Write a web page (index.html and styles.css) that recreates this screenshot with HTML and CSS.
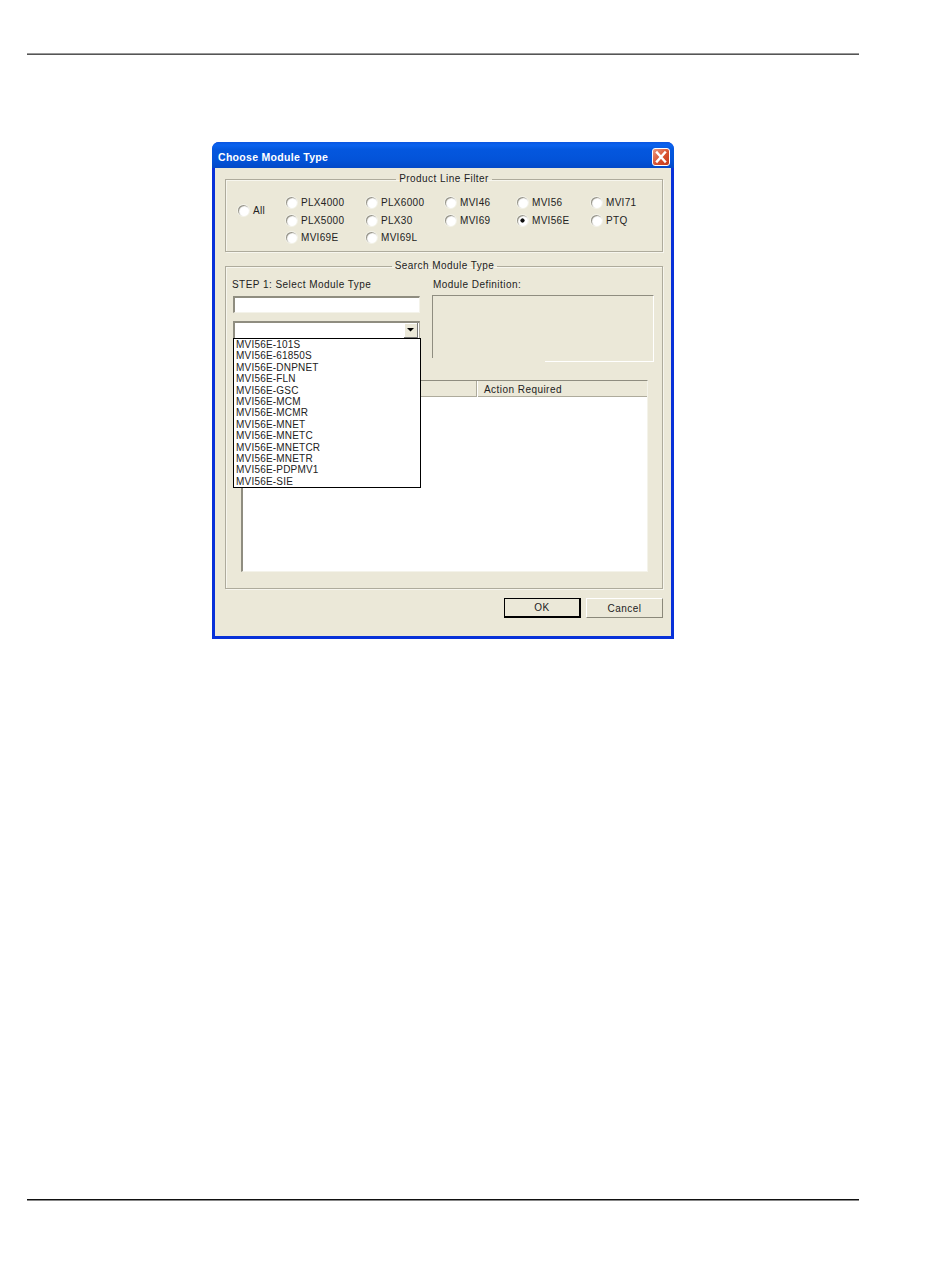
FILE: index.html
```html
<!DOCTYPE html>
<html lang="en">
<head>
<meta charset="utf-8">
<title>Choose Module Type</title>
<link rel="stylesheet" href="styles.css">
</head>
<body>
<div class="page">
  <div class="rule rule-top"></div>
  <section class="dialog">
    <header class="titlebar">
      <span class="title">Choose Module Type</span>
      <span class="close">
        <svg viewBox="0 0 18 18" width="18" height="18"><path d="M5 4.5 L13 13.5 M13 4.5 L5 13.5" stroke="#fff" stroke-width="2.4" stroke-linecap="square" fill="none"/></svg>
      </span>
    </header>
    <div class="client">
      <fieldset class="group filter">
        <legend>Product Line Filter</legend>
        <div class="filter-row">
          <label class="radio all"><input type="radio" name="pl"><span>All</span></label>
          <div class="radio-grid">
            <label class="radio"><input type="radio" name="pl"><span>PLX4000</span></label>
            <label class="radio"><input type="radio" name="pl"><span>PLX6000</span></label>
            <label class="radio"><input type="radio" name="pl"><span>MVI46</span></label>
            <label class="radio"><input type="radio" name="pl"><span>MVI56</span></label>
            <label class="radio"><input type="radio" name="pl"><span>MVI71</span></label>
            <label class="radio"><input type="radio" name="pl"><span>PLX5000</span></label>
            <label class="radio"><input type="radio" name="pl"><span>PLX30</span></label>
            <label class="radio"><input type="radio" name="pl"><span>MVI69</span></label>
            <label class="radio"><input type="radio" name="pl" checked><span>MVI56E</span></label>
            <label class="radio"><input type="radio" name="pl"><span>PTQ</span></label>
            <label class="radio"><input type="radio" name="pl"><span>MVI69E</span></label>
            <label class="radio"><input type="radio" name="pl"><span>MVI69L</span></label>
          </div>
        </div>
      </fieldset>
      <fieldset class="group search">
        <legend>Search Module Type</legend>
        <div class="search-top">
          <div class="step">
            <div class="label">STEP 1: Select Module Type</div>
            <div class="textbox"></div>
            <div class="combo">
              <span class="arrow"><svg viewBox="0 0 13 13" width="13" height="13"><path d="M3 5 H10 L6.5 8.5 Z" fill="#000"/></svg></span>
            </div>
            <ul class="dropdown">
              <li>MVI56E-101S</li>
              <li>MVI56E-61850S</li>
              <li>MVI56E-DNPNET</li>
              <li>MVI56E-FLN</li>
              <li>MVI56E-GSC</li>
              <li>MVI56E-MCM</li>
              <li>MVI56E-MCMR</li>
              <li>MVI56E-MNET</li>
              <li>MVI56E-MNETC</li>
              <li>MVI56E-MNETCR</li>
              <li>MVI56E-MNETR</li>
              <li>MVI56E-PDPMV1</li>
              <li>MVI56E-SIE</li>
            </ul>
          </div>
          <div class="definition">
            <div class="label">Module Definition:</div>
            <div class="defbox"></div>
          </div>
        </div>
        <div class="listview">
          <div class="lv-head">
            <div class="lv-col lv-first"></div>
            <div class="lv-col">Action Required</div>
          </div>
          <div class="lv-body"></div>
        </div>
      </fieldset>
      <div class="actions">
        <button class="btn btn-default" type="button">OK</button>
        <button class="btn" type="button">Cancel</button>
      </div>
    </div>
  </section>
  <div class="rule rule-bottom"></div>
</div>
</body>
</html>
```
FILE: styles.css
```css
* { box-sizing: border-box; }
html, body { margin: 0; padding: 0; background: #fff; }
.page {
  height: 1267px;
  padding-top: 53px;
  padding-bottom: 66px;
  display: flex;
  flex-direction: column;
  overflow: hidden;
  font-family: "Liberation Sans", Arial, sans-serif;
  font-size: 10px;
  letter-spacing: 0.45px;
  color: #222;
}
.rule { margin: 0 91px 0 27px; flex: none; }
.rule-top { height: 2px; background: #555; border-top: 1px solid #999; }
.rule-bottom { height: 2px; background: #888; border-top: 1px solid #111; margin-top: auto; }

.dialog {
  flex: none;
  width: 462px;
  height: 497px;
  margin: 87px 0 0 212px;
  border-radius: 7px 7px 0 0;
  display: flex;
  flex-direction: column;
  background: #0831d9;
  overflow: hidden;
}
.titlebar {
  flex: none;
  height: 26px;
  padding: 3px 4px 0 6px;
  display: flex;
  align-items: center;
  justify-content: space-between;
  background: linear-gradient(180deg, #0a55e0 0%, #0a63ee 12%, #0457de 30%, #0353d8 70%, #0349c8 100%);
}
.title {
  color: #fff;
  font-size: 10.5px;
  font-weight: 700;
  letter-spacing: 0.3px;
}
.close {
  width: 18px;
  height: 18px;
  display: block;
  border: 1px solid #fff;
  border-radius: 3px;
  background: linear-gradient(135deg, #ec9a80, #d8512f 55%, #c33a18);
  overflow: hidden;
}
.close svg { display: block; margin: -1px; }

.client {
  flex: 1;
  margin: 0 3px 3px 3px;
  padding: 5px 8px 0 10px;
  background: #ebe8d8;
  display: flex;
  flex-direction: column;
}
.group {
  margin: 0;
  padding: 0;
  min-width: 0;
  border: 1px solid #aeab9c;
  box-shadow: inset 1px 1px 0 #f7f6ee, 1px 1px 0 #f7f6ee;
}
.group legend {
  margin: 0 auto;
  padding: 0 3px;
  font-size: 10px;
  line-height: 12px;
  white-space: nowrap;
}
.filter { height: 79px; }
.filter-row {
  display: flex;
  align-items: flex-start;
  padding: 9px 0 0 12px;
  letter-spacing: 0.3px;
}
.radio { display: flex; align-items: center; height: 17.4px; white-space: nowrap; }
.all { width: 48px; margin-top: 8px; }
.all input { margin-right: 5px; }
.radio-grid {
  display: grid;
  grid-template-columns: 80px 79px 72px 74px 60px;
}
.radio input {
  appearance: none;
  -webkit-appearance: none;
  width: 11px;
  height: 11px;
  margin: 0 4px 0 0;
  flex: none;
  border-radius: 50%;
  background: #fff;
  box-shadow: inset 1px 1px 1px #8f8d80, 0 0 0 1px #f4f3ea;
}
.radio input:checked {
  background: radial-gradient(circle, #111 0, #111 1.8px, #fff 2.4px);
}
.search { height: 329px; margin-top: 8px; padding: 0 6px 0 7px; }
.search-top {
  display: grid;
  grid-template-columns: 187px 222px;
  column-gap: 12px;
  align-items: start;
  padding-top: 7px;
}
.step, .definition { position: relative; }
.label { line-height: 12px; height: 12px; margin: 0 0 5px -1px; white-space: nowrap; }
.textbox {
  height: 17px;
  background: #fff;
  border: 1px solid #f4f3ea;
  border-top: 2px solid #8f8d80;
  border-left: 2px solid #8f8d80;
}
.combo {
  position: relative;
  height: 18px;
  margin-top: 8px;
  background: #fff;
  border-top: 2px solid #8f8d80;
  border-left: 2px solid #8f8d80;
  border-right: 1px solid #aeab9c;
}
.arrow {
  position: absolute;
  right: 1px;
  top: 0;
  width: 14px;
  height: 15px;
  background: #ebe8d8;
  border-right: 1px solid #777;
  border-bottom: 1px solid #777;
  box-shadow: inset 1px 1px 0 #fff;
}
.arrow svg { display: block; }
.dropdown {
  position: absolute;
  top: 59px;
  left: 0;
  z-index: 2;
  width: 188px;
  height: 150px;
  margin: 0;
  padding: 0 0 0 2px;
  list-style: none;
  letter-spacing: 0.2px;
  background: #fff;
  border: 1px solid #000;
}
.dropdown li { height: 11.4px; line-height: 11.4px; white-space: nowrap; }
.definition .label { margin-left: 1px; }
.defbox {
  position: relative;
  height: 67px;
  margin-top: -1px;
  border-top: 1px solid #8f8d80;
  border-right: 1px solid #fff;
}
.defbox::before {
  content: "";
  position: absolute;
  left: 0;
  top: 0;
  width: 1px;
  height: 62px;
  background: #8f8d80;
}
.defbox::after {
  content: "";
  position: absolute;
  right: -1px;
  bottom: 0;
  width: 109px;
  height: 1px;
  background: #fff;
}

.listview {
  width: 407px;
  height: 192px;
  margin: 18px 0 0 8px;
  display: flex;
  flex-direction: column;
  border-left: 2px solid #8f8d80;
  border-top: 1px solid #8f8d80;
  border-right: 1px solid #f4f3ea;
  border-bottom: 1px solid #f4f3ea;
}
.lv-head {
  flex: none;
  height: 16px;
  display: grid;
  grid-template-columns: 234px 1fr;
  background: #ebe8d8;
  border-bottom: 1px solid #aeab9c;
}
.lv-col { padding-left: 7px; line-height: 18px; white-space: nowrap; }
.lv-first { border-right: 1px solid #aeab9c; box-shadow: 1px 0 0 #fff; }
.lv-body { flex: 1; background: #fff; }

.actions {
  display: flex;
  justify-content: flex-end;
  gap: 5px;
  margin-top: 9px;
}
.btn {
  width: 77px;
  height: 20px;
  padding: 0;
  font: inherit;
  letter-spacing: inherit;
  color: #222;
  background: #ebe8d8;
  border: 1px solid;
  border-color: #fff #8a887a #8a887a #fff;
  border-radius: 0;
}
.btn-default { border: 1px solid #000; border-right-width: 2px; border-bottom-width: 2px; }
```
